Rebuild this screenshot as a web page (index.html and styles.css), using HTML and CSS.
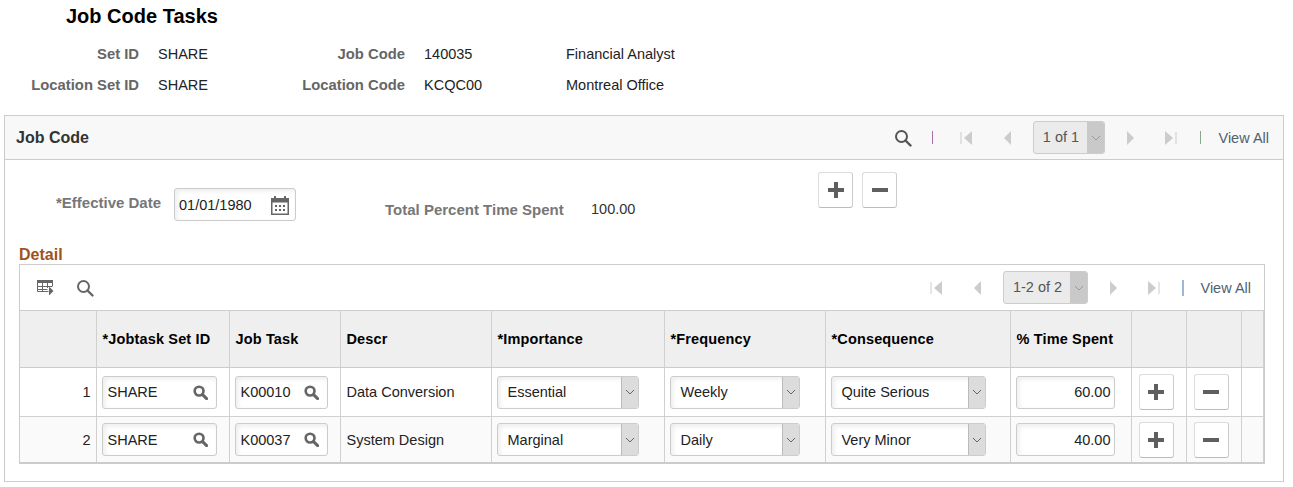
FILE: index.html
```html
<!DOCTYPE html>
<html lang="en">
<head>
    <meta charset="UTF-8">
    <title>Job Code Tasks</title>
    <link rel="stylesheet" href="styles.css">
</head>
<body>
    <svg class="sprites" width="0" height="0">
        <symbol id="i-search" viewBox="0 0 18 18"><circle cx="7.5" cy="7.5" r="5.5" fill="none" stroke="currentColor" stroke-width="2"/><path d="M11.5 11.5L16.5 16.5" stroke="currentColor" stroke-width="2.4" stroke-linecap="round"/></symbol>
        <symbol id="i-lookup" viewBox="0 0 16 16"><circle cx="6.500" cy="6.500" r="4.700" fill="none" stroke="currentColor" stroke-width="2.800"/><path d="M10.500 10.500L14.500 14.500" stroke="currentColor" stroke-width="3.200" stroke-linecap="round"/></symbol>
        <symbol id="i-plus" viewBox="0 0 18 18"><path d="M7 1h4v6h6v4h-6v6H7v-6H1V7h6z" fill="currentColor"/></symbol>
        <symbol id="i-minus" viewBox="0 0 18 18"><rect x="1" y="7" width="16" height="4" fill="currentColor"/></symbol>
        <symbol id="i-chev" viewBox="0 0 10 6"><path d="M1 1l4 4 4-4" fill="none" stroke="currentColor" stroke-width="1"/></symbol>
        <symbol id="i-first" viewBox="0 0 13 16"><path d="M1 2v12" stroke="currentColor"/><path d="M12 1v14L4 8z" fill="currentColor"/></symbol>
        <symbol id="i-prev" viewBox="0 0 9 16"><path d="M8 1v14L1 8z" fill="currentColor"/></symbol>
        <symbol id="i-next" viewBox="0 0 9 16"><path d="M1 1v14l7-7z" fill="currentColor"/></symbol>
        <symbol id="i-last" viewBox="0 0 13 16"><path d="M1 1v14l8-7z" fill="currentColor"/><path d="M12 2v12" stroke="currentColor"/></symbol>
        <symbol id="i-cal" viewBox="0 0 20 20"><path d="M1 3h3V1h2v2h8V1h2v2h3v17H1zM2.500 7.500v11h15v-11z" fill="currentColor"/><path d="M5 10h2v2H5zM9 10h2v2H9zM13 10h2v2h-2zM5 14h2v2H5zM9 14h2v2H9zM13 14h2v2h-2z" fill="currentColor"/></symbol>
        <symbol id="i-grid" viewBox="0 0 17 16"><path d="M0 0h16v3H0z" fill="currentColor"/><path d="M.5 3v8.500h11M5.500 3v8.500M10.500 3v5M.5 6.500h15M.5 9.500h10M15.500 3v3" fill="none" stroke="currentColor"/><path d="M12 6.500v9l4.500-4.500z" fill="currentColor"/></symbol>
    </svg>

    <h1 class="page-title">Job Code Tasks</h1>
    <div class="summary">
        <span class="lbl">Set ID</span><span>SHARE</span>
        <span class="lbl">Job Code</span><span>140035</span><span>Financial Analyst</span>
        <span class="lbl">Location Set ID</span><span>SHARE</span>
        <span class="lbl">Location Code</span><span>KCQC00</span><span>Montreal Office</span>
    </div>

    <section class="panel">
        <div class="panel-head">
            <h2>Job Code</h2>
            <div class="pager">
                <svg class="ico search-ico"><use href="#i-search"/></svg>
                <span class="sep sep-pink"></span>
                <svg class="nav first"><use href="#i-first"/></svg>
                <svg class="nav prev"><use href="#i-prev"/></svg>
                <span class="pager-sel"><span class="pager-txt">1 of 1</span><span class="pager-btn"><svg class="chev"><use href="#i-chev"/></svg></span></span>
                <svg class="nav next"><use href="#i-next"/></svg>
                <svg class="nav last"><use href="#i-last"/></svg>
                <span class="sep sep-green"></span>
                <span class="view-all">View All</span>
            </div>
        </div>

        <div class="panel-body">
            <div class="date-row">
                <span class="lbl eff-lbl">*Effective Date</span>
                <span class="field date-field">01/01/1980<svg class="cal"><use href="#i-cal"/></svg></span>
                <span class="lbl total-lbl">Total Percent Time Spent</span>
                <span class="total-val">100.00</span>
                <div class="top-btns">
                    <button class="btn"><svg><use href="#i-plus"/></svg></button>
                    <button class="btn"><svg><use href="#i-minus"/></svg></button>
                </div>
            </div>

            <h3 class="detail-title">Detail</h3>
            <div class="grid-wrap">
                <div class="grid-bar">
                    <div class="grid-tools">
                        <svg class="grid-ico"><use href="#i-grid"/></svg>
                        <svg class="ico"><use href="#i-search"/></svg>
                    </div>
                    <div class="pager pager-grid">
                        <svg class="nav first"><use href="#i-first"/></svg>
                        <svg class="nav prev"><use href="#i-prev"/></svg>
                        <span class="pager-sel wide"><span class="pager-txt">1-2 of 2</span><span class="pager-btn"><svg class="chev"><use href="#i-chev"/></svg></span></span>
                        <svg class="nav next"><use href="#i-next"/></svg>
                        <svg class="nav last"><use href="#i-last"/></svg>
                        <span class="sep sep-blue"></span>
                        <span class="view-all">View All</span>
                    </div>
                </div>
                <table class="grid">
                    <colgroup>
                        <col class="c-num"><col class="c-set"><col class="c-task"><col class="c-descr"><col class="c-imp"><col class="c-freq"><col class="c-cons"><col class="c-time"><col class="c-btn"><col class="c-btn"><col>
                    </colgroup>
                    <thead>
                        <tr>
                            <th></th>
                            <th>*Jobtask Set ID</th>
                            <th>Job Task</th>
                            <th>Descr</th>
                            <th>*Importance</th>
                            <th>*Frequency</th>
                            <th>*Consequence</th>
                            <th>% Time Spent</th>
                            <th></th>
                            <th></th>
                            <th></th>
                        </tr>
                    </thead>
                    <tbody>
                        <tr class="row-one">
                            <td class="num">1</td>
                            <td><span class="field set-field">SHARE<svg class="lookup"><use href="#i-lookup"/></svg></span></td>
                            <td><span class="field task-field">K00010<svg class="lookup"><use href="#i-lookup"/></svg></span></td>
                            <td class="descr">Data Conversion</td>
                            <td><span class="select imp-sel"><span class="select-txt">Essential</span><span class="select-btn"><svg class="chev"><use href="#i-chev"/></svg></span></span></td>
                            <td><span class="select freq-sel"><span class="select-txt">Weekly</span><span class="select-btn"><svg class="chev"><use href="#i-chev"/></svg></span></span></td>
                            <td><span class="select cons-sel"><span class="select-txt">Quite Serious</span><span class="select-btn"><svg class="chev"><use href="#i-chev"/></svg></span></span></td>
                            <td><span class="field time-field">60.00</span></td>
                            <td class="btn-cell"><button class="btn"><svg><use href="#i-plus"/></svg></button></td>
                            <td class="btn-cell"><button class="btn"><svg><use href="#i-minus"/></svg></button></td>
                            <td></td>
                        </tr>
                        <tr class="row-two">
                            <td class="num">2</td>
                            <td><span class="field set-field">SHARE<svg class="lookup"><use href="#i-lookup"/></svg></span></td>
                            <td><span class="field task-field">K00037<svg class="lookup"><use href="#i-lookup"/></svg></span></td>
                            <td class="descr">System Design</td>
                            <td><span class="select imp-sel"><span class="select-txt">Marginal</span><span class="select-btn"><svg class="chev"><use href="#i-chev"/></svg></span></span></td>
                            <td><span class="select freq-sel"><span class="select-txt">Daily</span><span class="select-btn"><svg class="chev"><use href="#i-chev"/></svg></span></span></td>
                            <td><span class="select cons-sel"><span class="select-txt">Very Minor</span><span class="select-btn"><svg class="chev"><use href="#i-chev"/></svg></span></span></td>
                            <td><span class="field time-field">40.00</span></td>
                            <td class="btn-cell"><button class="btn"><svg><use href="#i-plus"/></svg></button></td>
                            <td class="btn-cell"><button class="btn"><svg><use href="#i-minus"/></svg></button></td>
                            <td></td>
                        </tr>
                    </tbody>
                </table>
            </div>
        </div>
    </section>
</body>
</html>
```

FILE: styles.css
```css
* {
    box-sizing: border-box;
}
body {
    margin: 0;
    font-family: "Liberation Sans", Arial, sans-serif;
    font-size: 14.5px;
    color: #333;
    background: #fff;
}
.sprites {
    position: absolute;
}
.page-title {
    margin: 0;
    padding: 5px 0 0 66px;
    height: 39px;
    font-size: 20px;
    line-height: 22px;
    color: #000;
}
.summary {
    display: grid;
    grid-template-columns: 139px 124px 142px 161px auto;
    grid-auto-rows: 31px;
    line-height: 31px;
    height: 62px;
    margin-bottom: 14px;
    color: #222;
}
.summary > span:nth-child(2),
.summary > span:nth-child(7),
.summary > span:nth-child(4),
.summary > span:nth-child(9) {
    padding-left: 19px;
}
.summary .lbl {
    line-height: 30px;
}
.lbl {
    font-size: 14.8px;
    font-weight: bold;
    color: #666;
    text-align: right;
}
.panel {
    margin-left: 4px;
    width: 1280px;
    height: 367px;
    border: 1px solid #ccc;
}
.panel-head {
    height: 44px;
    display: flex;
    align-items: center;
    justify-content: space-between;
    background: #f8f8f8;
    border-bottom: 1px solid #ccc;
    padding: 0 14px 0 11px;
}
.panel-head h2 {
    margin: 0;
    font-size: 16px;
    color: #333;
}
.pager {
    display: flex;
    align-items: center;
    color: #666;
}
.ico {
    width: 18px;
    height: 18px;
    color: #666;
}
.search-ico {
    color: #555;
}
.sep {
    width: 1px;
    height: 13px;
}
.sep-pink {
    background: #a86ea8;
    margin: 0 27px 0 20px;
}
.sep-green {
    background: #8aa88a;
    margin: 0 17px 0 23px;
}
.sep-blue {
    width: 2px;
    height: 16px;
    background: #9db8d6;
    margin: 0 16px 0 22px;
}
.nav {
    color: #ccc;
    height: 16px;
}
.nav.first,
.nav.last {
    width: 13px;
}
.nav.prev,
.nav.next {
    width: 9px;
}
.nav.first {
    margin-right: 30px;
}
.nav.prev {
    margin-right: 21px;
}
.nav.next {
    margin-left: 21px;
}
.nav.last {
    margin-left: 29px;
}
.pager-sel {
    display: flex;
    width: 72px;
    height: 33px;
    border: 1px solid #ccc;
    border-radius: 3px;
    background: #ebebeb;
    overflow: hidden;
}
.pager-sel.wide {
    width: 85px;
}
.pager-txt {
    flex: 1;
    text-align: center;
    line-height: 31px;
    color: #555;
}
.pager-btn {
    width: 17px;
    background: #c9c9c9;
    display: flex;
    align-items: center;
    justify-content: center;
    color: #999;
}
.chev {
    width: 10px;
    height: 6px;
}
.view-all {
    color: #51606f;
}
.panel-body {
    padding: 0 14px;
}
.date-row {
    position: relative;
    height: 85px;
}
.eff-lbl {
    position: absolute;
    left: 37px;
    top: 34px;
    font-size: 15px;
    color: #777;
}
.date-field {
    position: absolute;
    left: 155px;
    top: 28px;
    width: 122px;
}
.total-lbl {
    position: absolute;
    left: 366px;
    top: 41px;
    font-size: 15px;
    color: #777;
}
.total-val {
    position: absolute;
    left: 572px;
    top: 41px;
}
.top-btns {
    position: absolute;
    left: 799px;
    top: 12px;
    display: flex;
    gap: 9px;
}
.field {
    display: inline-flex;
    align-items: center;
    justify-content: space-between;
    height: 33px;
    padding: 0 4px;
    border: 1px solid #ccc;
    border-radius: 3px;
    background: #fff;
    box-shadow: inset 2px 2px 5px rgba(0, 0, 0, 0.08);
    color: #222;
    vertical-align: middle;
}
.cal {
    width: 20px;
    height: 20px;
    color: #666;
    margin-right: 1px;
}
.btn {
    width: 35px;
    height: 36px;
    padding: 0;
    display: flex;
    align-items: center;
    justify-content: center;
    background: #fff;
    border: 1px solid #ddd;
    border-bottom-color: #bbb;
    border-right-color: #ccc;
    border-radius: 3px;
    color: #5f5f5f;
}
.btn svg {
    width: 18px;
    height: 18px;
}
.detail-title {
    margin: 0;
    font-size: 16px;
    line-height: 19px;
    color: #a0521d;
}
.grid-wrap {
    width: 1246px;
    border: 1px solid #ccc;
    border-bottom: 0;
}
.grid-bar {
    height: 45px;
    display: flex;
    align-items: center;
    justify-content: space-between;
    padding: 0 13px 0 17px;
}
.grid-tools {
    display: flex;
    align-items: center;
    gap: 22px;
}
.grid-ico {
    width: 17px;
    height: 16px;
    color: #666;
}
.grid {
    width: 100%;
    table-layout: fixed;
    border-collapse: collapse;
}
.c-num { width: 76px; }
.c-set { width: 133px; }
.c-task { width: 111px; }
.c-descr { width: 151px; }
.c-imp { width: 173px; }
.c-freq { width: 161px; }
.c-cons { width: 185px; }
.c-time { width: 121px; }
.c-btn { width: 55px; }
.grid th,
.grid td {
    border: 1px solid #d0d0d0;
    padding: 0 5px;
    text-align: left;
    color: #222;
}
.grid th:first-child,
.grid td:first-child {
    border-left: 0;
}
.grid th {
    height: 57px;
    padding-left: 6px;
    background: #efefef;
    color: #000;
    letter-spacing: 0.15px;
    border-top-color: #ccc;
    border-bottom-color: #ccc;
}
.row-one td {
    height: 49px;
}
.row-two td {
    height: 46px;
    padding-top: 1px;
    background: #fafafa;
    border-bottom: 2px solid #ccc;
}
.grid td.num {
    text-align: right;
    padding-right: 5px;
}
.grid td.descr {
    padding-left: 6px;
}
.set-field {
    width: 115px;
    padding-left: 5px;
}
.task-field {
    width: 93px;
    padding-left: 5px;
}
.time-field {
    width: 99px;
    padding-right: 3px;
    justify-content: flex-end;
}
.lookup {
    width: 15px;
    height: 15px;
    color: #666;
    margin-right: 4px;
}
.select {
    display: inline-flex;
    height: 33px;
    border: 1px solid #ccc;
    border-radius: 3px;
    background: #fff;
    box-shadow: inset 2px 2px 5px rgba(0, 0, 0, 0.08);
    overflow: hidden;
    vertical-align: middle;
}
.imp-sel { width: 142px; }
.freq-sel { width: 130px; }
.cons-sel { width: 155px; }
.select-txt {
    flex: 1;
    padding-left: 10px;
    line-height: 31px;
    color: #222;
}
.row-two .select-txt {
    line-height: 33px;
}
.select-btn {
    width: 17px;
    display: flex;
    align-items: center;
    justify-content: center;
    background: #dcdcdc;
    border-left: 1px solid #bbb;
    color: #666;
}
.btn-cell .btn {
    margin-left: 2px;
}
```
